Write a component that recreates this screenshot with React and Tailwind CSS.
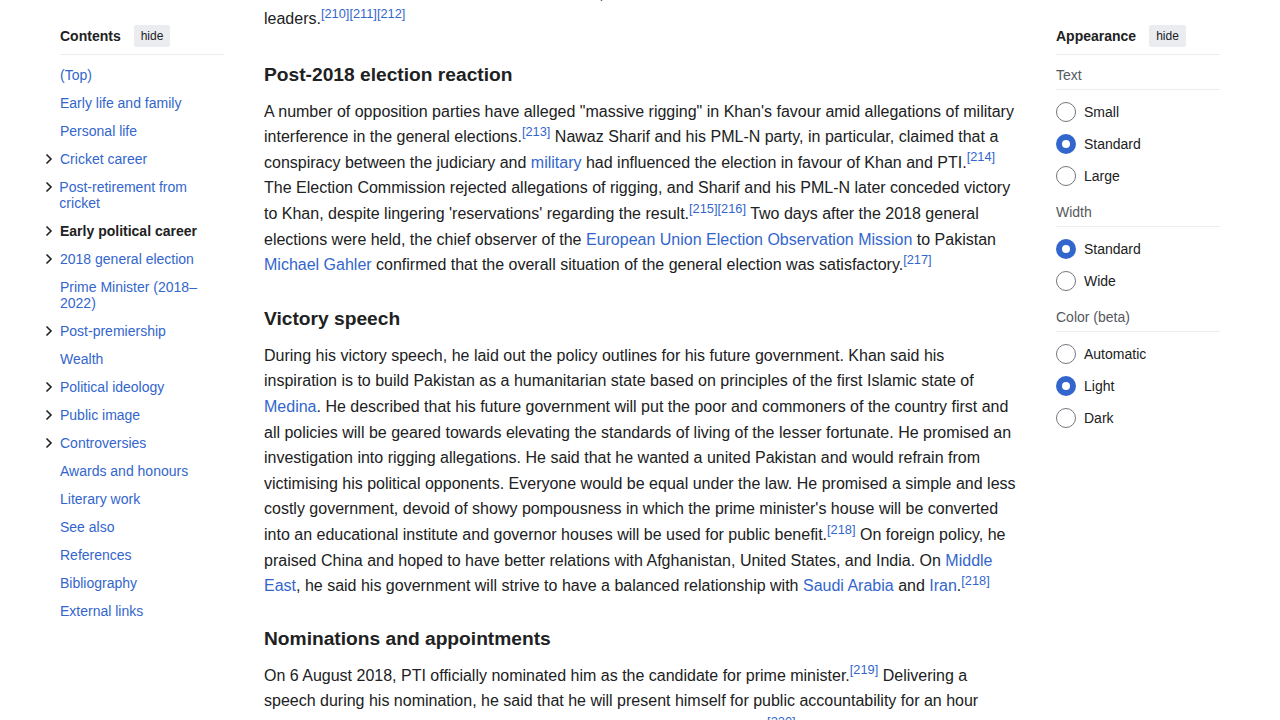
const tocItems = [
  { label: '(Top)' },
  { label: 'Early life and family' },
  { label: 'Personal life' },
  { label: 'Cricket career', sub: true },
  { label: 'Post-retirement from cricket', sub: true },
  { label: 'Early political career', sub: true, active: true },
  { label: '2018 general election', sub: true },
  { label: 'Prime Minister (2018–2022)' },
  { label: 'Post-premiership', sub: true },
  { label: 'Wealth' },
  { label: 'Political ideology', sub: true },
  { label: 'Public image', sub: true },
  { label: 'Controversies', sub: true },
  { label: 'Awards and honours' },
  { label: 'Literary work' },
  { label: 'See also' },
  { label: 'References' },
  { label: 'Bibliography' },
  { label: 'External links' },
];

const appearance = [
  { title: 'Text', options: ['Small', 'Standard', 'Large'], checked: 'Standard' },
  { title: 'Width', options: ['Standard', 'Wide'], checked: 'Standard' },
  { title: 'Color (beta)', options: ['Automatic', 'Light', 'Dark'], checked: 'Light' },
];

const Chevron = () => (
  <svg width="8" height="12" viewBox="0 0 8 12" className="block">
    <path d="M1.5 1.5 L6 6 L1.5 10.5" fill="none" stroke="#202122" strokeWidth="1.6" />
  </svg>
);

const A = ({ children }) => <a className="text-[#3366cc]">{children}</a>;
const Ref = ({ children }) => <sup className="text-[12.8px] text-[#3366cc]">{children}</sup>;

const PanelHeader = ({ title }) => (
  <div className="flex items-center gap-[13px] pt-[25px] pb-[7px] border-b border-[#eaecf0]">
    <span className="text-[14px] font-bold text-[#202122]">{title}</span>
    <button className="h-[22px] px-[7px] rounded-[2px] bg-[#eaecf0] text-[12px] text-[#202122]">hide</button>
  </div>
);

const Radio = ({ on }) =>
  on ? (
    <span className="w-[20px] h-[20px] rounded-full border-[6px] border-[#3366cc] bg-white shrink-0" />
  ) : (
    <span className="w-[20px] h-[20px] rounded-full border border-[#72777d] bg-white shrink-0" />
  );

export default function App() {
  return (
    <div className="w-[1280px] h-[720px] overflow-hidden bg-white font-['Liberation_Sans',Arial,sans-serif] text-[#202122]">
      <div className="flex px-[60px] gap-[40px]">
        {/* Contents */}
        <nav className="w-[164px] shrink-0">
          <PanelHeader title="Contents" />
          <ul className="pt-[6px]">
            {tocItems.map((item) => (
              <li key={item.label} className="flex py-[6px] text-[14px] leading-[16px]">
                {item.sub && (
                  <span className="-ml-[15px] w-[15px] pt-[2px]">
                    <Chevron />
                  </span>
                )}
                <span className={item.active ? 'font-bold text-[#202122]' : 'text-[#3366cc]'}>{item.label}</span>
              </li>
            ))}
          </ul>
        </nav>

        {/* Article */}
        <main className="w-[752px] shrink-0 -mt-[19.5px] text-[16px] leading-[25.6px]">
          <p className="mb-2">
            betterment of law and order situation in <A>Karachi</A>, and betterment of relations with Baloch
            <br />
            leaders.<Ref>[210][211][212]</Ref>
          </p>
          <h3 className="mt-[27px] text-[19.2px] leading-[32px] font-bold">Post-2018 election reaction</h3>
          <p className="my-2">
            A number of opposition parties have alleged "massive rigging" in Khan's favour amid allegations of military
            interference in the general elections.<Ref>[213]</Ref> Nawaz Sharif and his PML-N party, in particular,
            claimed that a conspiracy between the judiciary and <A>military</A> had influenced the election in favour of
            Khan and PTI.<Ref>[214]</Ref> The Election Commission rejected allegations of rigging, and Sharif and his
            PML-N later conceded victory to Khan, despite lingering 'reservations' regarding the result.
            <Ref>[215][216]</Ref> Two days after the 2018 general elections were held, the chief observer of the{' '}
            <A>European Union Election Observation Mission</A> to Pakistan <A>Michael Gahler</A> confirmed that the
            overall situation of the general election was satisfactory.<Ref>[217]</Ref>
          </p>
          <h3 className="mt-[25px] text-[19.2px] leading-[32px] font-bold">Victory speech</h3>
          <p className="my-2">
            During his victory speech, he laid out the policy outlines for his future government. Khan said his
            inspiration is to build Pakistan as a humanitarian state based on principles of the first Islamic state of{' '}
            <A>Medina</A>. He described that his future government will put the poor and commoners of the country first
            and all policies will be geared towards elevating the standards of living of the lesser fortunate. He
            promised an investigation into rigging allegations. He said that he wanted a united Pakistan and would
            refrain from victimising his political opponents. Everyone would be equal under the law. He promised a
            simple and less costly government, devoid of showy pompousness in which the prime minister's house will be
            converted into an educational institute and governor houses will be used for public benefit.
            <Ref>[218]</Ref> On foreign policy, he praised China and hoped to have better relations with Afghanistan,
            United States, and India. On <A>Middle East</A>, he said his government will strive to have a balanced
            relationship with <A>Saudi Arabia</A> and <A>Iran</A>.<Ref>[218]</Ref>
          </p>
          <h3 className="mt-[24px] text-[19.2px] leading-[32px] font-bold">Nominations and appointments</h3>
          <p className="my-2">
            On 6 August 2018, PTI officially nominated him as the candidate for prime minister.<Ref>[219]</Ref>{' '}
            Delivering a speech during his nomination, he said that he will present himself for public accountability
            for an hour every month by answering the questions of the people in the Assembly.<Ref>[220]</Ref>
          </p>
        </main>

        {/* Appearance */}
        <aside className="w-[164px] shrink-0">
          <PanelHeader title="Appearance" />
          {appearance.map((group) => (
            <div key={group.title}>
              <div className="mt-[12px] pb-[6px] border-b border-[#eaecf0] text-[14px] leading-[16px] text-[#54595d]">
                {group.title}
              </div>
              <div className="pt-[6px]">
                {group.options.map((opt) => (
                  <label key={opt} className="flex items-center gap-[8px] h-[32px] text-[14px] text-[#202122]">
                    <Radio on={opt === group.checked} />
                    {opt}
                  </label>
                ))}
              </div>
            </div>
          ))}
        </aside>
      </div>
    </div>
  );
}
